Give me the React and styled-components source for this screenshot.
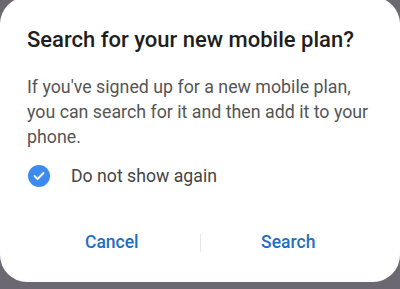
import React, { useState } from 'react';
import styled, { createGlobalStyle } from 'styled-components';

const GlobalStyle = createGlobalStyle`
  html, body {
    margin: 0;
    padding: 0;
    background: #6c6872;
  }
  body {
    height: 289px;
    overflow: hidden;
    font-family: Roboto, "Noto Sans", "Liberation Sans", sans-serif;
  }
`;

const Dialog = styled.div`
  width: 400px;
  height: 285px;
  margin-top: -3px;
  box-sizing: border-box;
  padding: 29px 24px 0 27px;
  background: #ffffff;
  border-radius: 27px;
  display: flex;
  flex-direction: column;
`;

const Title = styled.h2`
  margin: 0;
  font-size: 22px;
  line-height: 28px;
  font-weight: 500;
  color: #1e1e1e;
`;

const Body = styled.p`
  margin: 20px 0 0;
  font-size: 17.8px;
  line-height: 25px;
  font-weight: 400;
  color: #555555;
`;

const CheckRow = styled.label`
  margin-top: 14px;
  height: 26px;
  display: flex;
  align-items: center;
  gap: 21px;
  cursor: pointer;
`;

const CheckCircle = styled.span`
  width: 22px;
  height: 22px;
  margin-left: 1px;
  border-radius: 50%;
  background: ${(p) => (p.checked ? '#3d8bef' : 'transparent')};
  border: ${(p) => (p.checked ? 'none' : '2px solid #8a8a8a')};
  display: flex;
  align-items: center;
  justify-content: center;
  flex-shrink: 0;
`;

const CheckLabel = styled.span`
  font-size: 17.7px;
  color: #444444;
`;

const Actions = styled.div`
  margin: 29px 0 0 -3px;
  display: grid;
  grid-template-columns: 1fr 1px 1fr;
  align-items: center;
`;

const ActionButton = styled.button`
  height: 48px;
  border: none;
  background: none;
  padding: 0;
  font-family: inherit;
  font-size: 17.5px;
  font-weight: 500;
  color: #1f6ec3;
  line-height: 48px;
  cursor: pointer;
`;

const Divider = styled.span`
  width: 1px;
  height: 18px;
  margin-top: 2px;
  background: #e6e6e6;
`;

export default function App() {
  const [checked, setChecked] = useState(true);

  return (
    <>
      <GlobalStyle />
      <Dialog>
        <Title>Search for your new mobile plan?</Title>
        <Body>
          If you've signed up for a new mobile plan, you can search for it and
          then add it to your phone.
        </Body>
        <CheckRow onClick={() => setChecked(!checked)}>
          <CheckCircle checked={checked}>
            {checked && (
              <svg width="12" height="10" viewBox="0 0 12 10">
                <path
                  d="M1.5 5 L4.6 8 L10.5 2"
                  fill="none"
                  stroke="#fff"
                  strokeWidth="1.8"
                  strokeLinecap="round"
                  strokeLinejoin="round"
                />
              </svg>
            )}
          </CheckCircle>
          <CheckLabel>Do not show again</CheckLabel>
        </CheckRow>
        <Actions>
          <ActionButton>Cancel</ActionButton>
          <Divider />
          <ActionButton>Search</ActionButton>
        </Actions>
      </Dialog>
    </>
  );
}
